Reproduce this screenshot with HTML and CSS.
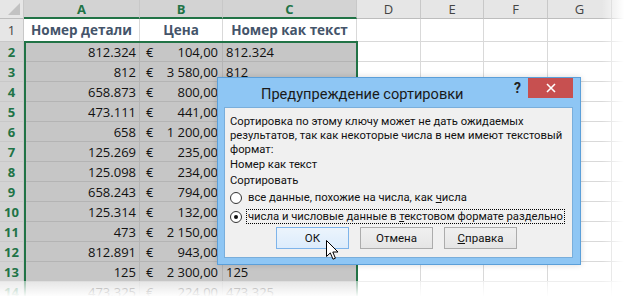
FILE: index.html
```html
<!DOCTYPE html>
<html lang="ru">
<head>
<meta charset="utf-8">
<link rel="stylesheet" href="styles.css">
</head>
<body>
<div class="stage">
  <div class="sheet">
    <div class="corner"><span class="tri"></span></div>
    <div class="ch sel">A</div>
    <div class="ch sel">B</div>
    <div class="ch sel">C</div>
    <div class="ch">D</div>
    <div class="ch">E</div>
    <div class="ch">F</div>
    <div class="ch">G</div>
    <div class="ch last"></div>

    <div class="rh">1</div>
    <div class="c hd">Номер детали</div>
    <div class="c hd">Цена</div>
    <div class="c hd">Номер как текст</div>
    <div class="c"></div><div class="c"></div><div class="c"></div><div class="c"></div><div class="c"></div>

    <div class="rh sel">2</div>
    <div class="c s num">812.324</div>
    <div class="c s eur"><span>€</span><span>104,00</span></div>
    <div class="c s txt">812.324</div>
    <div class="c"></div><div class="c"></div><div class="c"></div><div class="c"></div><div class="c"></div>

    <div class="rh sel">3</div>
    <div class="c s num">812</div>
    <div class="c s eur"><span>€</span><span>3 580,00</span></div>
    <div class="c s txt">812</div>
    <div class="c"></div><div class="c"></div><div class="c"></div><div class="c"></div><div class="c"></div>

    <div class="rh sel">4</div>
    <div class="c s num">658.873</div>
    <div class="c s eur"><span>€</span><span>800,00</span></div>
    <div class="c s txt">658.873</div>
    <div class="c"></div><div class="c"></div><div class="c"></div><div class="c"></div><div class="c"></div>

    <div class="rh sel">5</div>
    <div class="c s num">473.111</div>
    <div class="c s eur"><span>€</span><span>441,00</span></div>
    <div class="c s txt">473.111</div>
    <div class="c"></div><div class="c"></div><div class="c"></div><div class="c"></div><div class="c"></div>

    <div class="rh sel">6</div>
    <div class="c s num">658</div>
    <div class="c s eur"><span>€</span><span>1 200,00</span></div>
    <div class="c s txt">658</div>
    <div class="c"></div><div class="c"></div><div class="c"></div><div class="c"></div><div class="c"></div>

    <div class="rh sel">7</div>
    <div class="c s num">125.269</div>
    <div class="c s eur"><span>€</span><span>235,00</span></div>
    <div class="c s txt">125.269</div>
    <div class="c"></div><div class="c"></div><div class="c"></div><div class="c"></div><div class="c"></div>

    <div class="rh sel">8</div>
    <div class="c s num">125.098</div>
    <div class="c s eur"><span>€</span><span>234,00</span></div>
    <div class="c s txt">125.098</div>
    <div class="c"></div><div class="c"></div><div class="c"></div><div class="c"></div><div class="c"></div>

    <div class="rh sel">9</div>
    <div class="c s num">658.243</div>
    <div class="c s eur"><span>€</span><span>794,00</span></div>
    <div class="c s txt">658.243</div>
    <div class="c"></div><div class="c"></div><div class="c"></div><div class="c"></div><div class="c"></div>

    <div class="rh sel">10</div>
    <div class="c s num">125.314</div>
    <div class="c s eur"><span>€</span><span>132,00</span></div>
    <div class="c s txt">125.314</div>
    <div class="c"></div><div class="c"></div><div class="c"></div><div class="c"></div><div class="c"></div>

    <div class="rh sel">11</div>
    <div class="c s num">473</div>
    <div class="c s eur"><span>€</span><span>2 150,00</span></div>
    <div class="c s txt">473</div>
    <div class="c"></div><div class="c"></div><div class="c"></div><div class="c"></div><div class="c"></div>

    <div class="rh sel">12</div>
    <div class="c s num">812.891</div>
    <div class="c s eur"><span>€</span><span>943,00</span></div>
    <div class="c s txt">812.891</div>
    <div class="c"></div><div class="c"></div><div class="c"></div><div class="c"></div><div class="c"></div>

    <div class="rh sel">13</div>
    <div class="c s num">125</div>
    <div class="c s eur"><span>€</span><span>2 300,00</span></div>
    <div class="c s txt">125</div>
    <div class="c"></div><div class="c"></div><div class="c"></div><div class="c"></div><div class="c"></div>

    <div class="rh sel">14</div>
    <div class="c s num">473.325</div>
    <div class="c s eur"><span>€</span><span>224,00</span></div>
    <div class="c s txt">473.325</div>
    <div class="c"></div><div class="c"></div><div class="c"></div><div class="c"></div><div class="c"></div>
  </div>

  <div class="selection"></div>

  <div class="dialog">
    <div class="titlebar">
      <div class="title">Предупреждение сортировки</div>
      <div class="help">?</div>
      <div class="close">
        <svg width="10" height="10" viewBox="0 0 10 10"><path d="M1 1 L9 9 M9 1 L1 9" stroke="#fff" stroke-width="1.6" fill="none"/></svg>
      </div>
    </div>
    <div class="panel">
      <p class="msg">Сортировка по этому ключу может не дать ожидаемых<br>результатов, так как некоторые числа в нем имеют текстовый<br>формат:</p>
      <p class="field">Номер как текст</p>
      <p class="label">Сортировать</p>
      <div class="radio"><span class="dot"></span><span class="rtext">все данные, похожие на числа, как <u>ч</u>исла</span></div>
      <div class="radio on"><span class="dot"></span><span class="rtext focus">числа и числовые данные в <u>т</u>екстовом формате раздельно</span></div>
      <div class="buttons">
        <div class="btn hot">ОК</div>
        <div class="btn">Отмена</div>
        <div class="btn"><u>С</u>правка</div>
      </div>
    </div>
  </div>

  <svg class="cursor" width="14" height="22" viewBox="0 0 14 22">
    <path d="M0.5 0.5 L0.5 16.5 L4.3 12.9 L7 19.2 L9.4 18.2 L6.8 12 L12 12 Z" fill="#fff" stroke="#000" stroke-width="1" stroke-linejoin="miter"/>
  </svg>

  <div class="fade-right"></div>
  <div class="fade-bottom"></div>
</div>
</body>
</html>
```

FILE: styles.css
```css
* { box-sizing: border-box; }
html, body { margin: 0; padding: 0; background: #fff; }
.stage {
  position: relative;
  width: 628px;
  height: 296px;
  overflow: hidden;
  font-family: "Open Sans", "Noto Sans", sans-serif;
}
.sheet {
  display: grid;
  grid-template-columns: 24px 116px 83px 134px 64px 63px 64px 64px 16px;
  grid-template-rows: 19px 23px repeat(13, 20px);
}
.corner {
  background: #e6e6e6;
  border-right: 1px solid #c8c8c8;
  border-bottom: 1px solid #bdbdbd;
  position: relative;
}
.corner .tri {
  position: absolute;
  right: 3px;
  bottom: 3px;
  width: 0; height: 0;
  border-left: 12px solid transparent;
  border-bottom: 12px solid #c2c2c2;
}
.ch {
  background: #e6e6e6;
  border-right: 1px solid #c8c8c8;
  border-bottom: 1px solid #bdbdbd;
  display: flex;
  align-items: center;
  justify-content: center;
  font-size: 13px;
  color: #444;
}
.ch.sel {
  background: #d3d3d3;
  color: #217346;
  font-weight: bold;
  border-bottom: 2px solid #217346;
}
.ch.last { border-right: none; }
.rh {
  background: #e6e6e6;
  border-right: 1px solid #c8c8c8;
  border-bottom: 1px solid #c8c8c8;
  display: flex;
  align-items: center;
  justify-content: center;
  font-size: 13px;
  color: #444;
}
.rh.sel {
  background: #d3d3d3;
  color: #217346;
  font-weight: bold;
}
.c {
  border-right: 1px solid #d9d9d9;
  border-bottom: 1px solid #d9d9d9;
  font-size: 13px;
  color: #111;
  display: flex;
  align-items: flex-end;
  line-height: 18px;
  white-space: nowrap;
  overflow: hidden;
}
.c.hd {
  justify-content: center;
  align-items: center;
  font-weight: bold;
  color: #44546a;
  font-size: 13.5px;
}
.c.s {
  background: #c6c6c6;
  border-right-color: #b4b4b4;
  border-bottom-color: #b4b4b4;
}
.num { justify-content: flex-end; padding-right: 3px; }
.txt { padding-left: 3px; }
.eur { justify-content: space-between; padding: 0 4px 0 6px; }

.selection {
  position: absolute;
  left: 24px;
  top: 41px;
  width: 334px;
  height: 270px;
  border: 2px solid #217346;
  pointer-events: none;
}

.dialog {
  position: absolute;
  left: 217px;
  top: 77px;
  width: 364px;
  height: 188px;
  background: #8ec6f4;
  border: 1px solid #5b9fd9;
  box-shadow: 0 0 6px rgba(0,0,0,0.15);
  display: flex;
  flex-direction: column;
  font-family: Roboto, "Open Sans", sans-serif;
}
.titlebar {
  height: 29px;
  display: flex;
  align-items: flex-start;
}
.title {
  flex: 1;
  padding: 6px 0 0 43px;
  font-size: 14.6px;
  color: #1a1a1a;
  line-height: 20px;
  white-space: nowrap;
}
.help {
  font-weight: bold;
  font-size: 14px;
  color: #222;
  padding-top: 2px;
  width: 14px;
}
.close {
  width: 45px;
  height: 20px;
  background: #c75050;
  margin-right: 7px;
  display: flex;
  align-items: center;
  justify-content: center;
}
.panel {
  flex: 1;
  margin: 0 7px 6px 6px;
  background: #f0f0f0;
  border: 1px solid #79aedb;
  padding: 7px 0 0 5px;
  font-size: 11.25px;
  color: #111;
  white-space: nowrap;
}
.panel p { margin: 0; }
.msg { line-height: 14px; }
.field { margin-top: 1px !important; line-height: 14px; }
.label { margin-top: 2px !important; line-height: 14px; }
.radio {
  display: flex;
  align-items: center;
  height: 19px;
}
.dot {
  width: 12px;
  height: 12px;
  border-radius: 50%;
  border: 1px solid #333;
  background: #fff;
  margin-right: 5px;
  position: relative;
  flex: none;
}
.radio.on .dot::after {
  content: "";
  position: absolute;
  left: 3px; top: 3px;
  width: 4px; height: 4px;
  border-radius: 50%;
  background: #111;
}
.rtext { padding: 0 1px; line-height: 13px; }
.rtext.focus { outline: 1px dotted #000; }
.buttons {
  display: flex;
  gap: 11px;
  margin: 1px 0 0 46px;
}
.btn {
  width: 73px;
  height: 22px;
  border: 1px solid #acacac;
  background: linear-gradient(#f0f0f0, #e5e5e5);
  display: flex;
  align-items: center;
  justify-content: center;
  font-size: 11.5px;
}
.btn.hot {
  border-color: #7eb4ea;
  background: linear-gradient(#ecf4fc, #dcecfc);
}

.cursor {
  position: absolute;
  left: 326px;
  top: 240px;
}
.fade-right {
  position: absolute;
  top: 0; right: 0;
  width: 26px; height: 296px;
  background: linear-gradient(to right, rgba(255,255,255,0), #fff 85%);
}
.fade-bottom {
  position: absolute;
  left: 0; bottom: 0;
  width: 628px; height: 15px;
  background: linear-gradient(rgba(255,255,255,0.55), rgba(255,255,255,0.97));
}
```
